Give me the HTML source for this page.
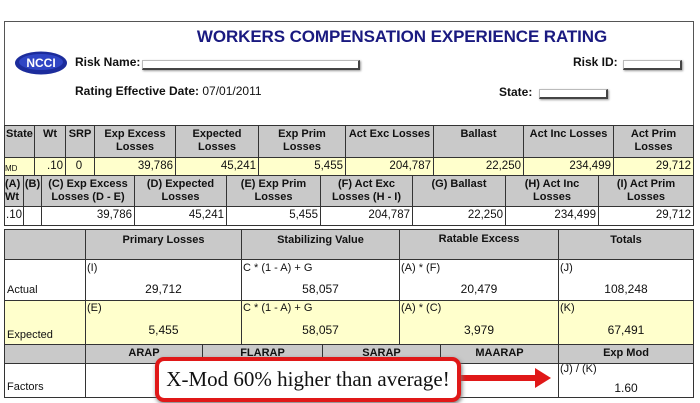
<!DOCTYPE html>
<html><head><style>
body{margin:0;width:700px;height:403px;background:#fff;position:relative;overflow:hidden;font-family:"Liberation Sans",Arial,sans-serif;color:#111}
.a{position:absolute;box-sizing:border-box}
.c{position:absolute;box-sizing:border-box;border:1px solid #333;font-size:11px;font-weight:bold;text-align:center;line-height:13px;padding-top:2px}
.g{background:#c9c9c9}
.y{background:#ffffcc}
.w{background:#fff}
.n{font-weight:normal;text-align:right;padding-right:2px;font-size:11.5px}
.inp{position:absolute;height:7px;border:1px solid #bbb;border-bottom:2px solid #444;border-right:2px solid #444;box-shadow:1px 1px 2px #999}
.t3{position:absolute;box-sizing:border-box;border:1px solid #333;font-size:11px}
</style></head><body>
<div class="a" style="left:4px;top:21px;width:690px;height:105px;border:1px solid #555;border-bottom:none"></div>
<div class="a" style="left:0;top:27px;width:814px;text-align:center;font-size:17px;font-weight:bold;color:#1a1a80;letter-spacing:-0.1px;padding-right:10px">WORKERS COMPENSATION EXPERIENCE RATING</div>
<svg class="a" style="left:14px;top:50px" width="54" height="26"><ellipse cx="27" cy="13" rx="26" ry="11.5" fill="#1c2c9c"/><ellipse cx="27" cy="12" rx="22" ry="8" fill="#2f45c4"/><text x="27" y="17" text-anchor="middle" font-family="Liberation Sans" font-weight="bold" font-size="12" fill="#fff">NCCI</text></svg>
<div class="a" style="left:75px;top:55px;font-size:12px;font-weight:bold">Risk Name:</div>
<div class="inp" style="left:142px;top:60px;width:215px"></div>
<div class="a" style="left:75px;top:84px;font-size:12px;font-weight:bold">Rating Effective Date: <span style="font-weight:normal">07/01/2011</span></div>
<div class="a" style="left:573px;top:55px;font-size:12px;font-weight:bold">Risk ID:</div>
<div class="inp" style="left:623px;top:60px;width:56px"></div>
<div class="a" style="left:499px;top:85px;font-size:12px;font-weight:bold">State:</div>
<div class="inp" style="left:539px;top:89px;width:66px"></div>

<div class="c g" style="left:4px;top:125px;width:31px;height:33px;text-align:left;padding-left:1px">State</div>
<div class="c g" style="left:34px;top:125px;width:32px;height:33px">Wt</div>
<div class="c g" style="left:65px;top:125px;width:30px;height:33px">SRP</div>
<div class="c g" style="left:94px;top:125px;width:82px;height:33px">Exp Excess<br>Losses</div>
<div class="c g" style="left:175px;top:125px;width:84px;height:33px">Expected<br>Losses</div>
<div class="c g" style="left:258px;top:125px;width:88px;height:33px">Exp Prim<br>Losses</div>
<div class="c g" style="left:345px;top:125px;width:89px;height:33px">Act Exc Losses</div>
<div class="c g" style="left:433px;top:125px;width:91px;height:33px">Ballast</div>
<div class="c g" style="left:523px;top:125px;width:91px;height:33px">Act Inc Losses</div>
<div class="c g" style="left:613px;top:125px;width:81px;height:33px">Act Prim<br>Losses</div>

<div class="c y n" style="left:4px;top:157px;width:31px;height:19px;text-align:left;font-size:8px;padding-top:4px">MD</div>
<div class="c y n" style="left:34px;top:157px;width:32px;height:19px">.10</div>
<div class="c y n" style="left:65px;top:157px;width:30px;height:19px;text-align:center">0</div>
<div class="c y n" style="left:94px;top:157px;width:82px;height:19px">39,786</div>
<div class="c y n" style="left:175px;top:157px;width:84px;height:19px">45,241</div>
<div class="c y n" style="left:258px;top:157px;width:88px;height:19px">5,455</div>
<div class="c y n" style="left:345px;top:157px;width:89px;height:19px">204,787</div>
<div class="c y n" style="left:433px;top:157px;width:91px;height:19px">22,250</div>
<div class="c y n" style="left:523px;top:157px;width:91px;height:19px">234,499</div>
<div class="c y n" style="left:613px;top:157px;width:81px;height:19px">29,712</div>

<div class="c g" style="left:4px;top:175px;width:20px;height:32px;text-align:left">(A)<br>Wt</div>
<div class="c g" style="left:23px;top:175px;width:19px;height:32px">(B)</div>
<div class="c g" style="left:41px;top:175px;width:94px;height:32px">(C) Exp Excess<br>Losses (D - E)</div>
<div class="c g" style="left:134px;top:175px;width:93px;height:32px">(D) Expected<br>Losses</div>
<div class="c g" style="left:226px;top:175px;width:95px;height:32px">(E) Exp Prim<br>Losses</div>
<div class="c g" style="left:320px;top:175px;width:93px;height:32px">(F) Act Exc<br>Losses (H - I)</div>
<div class="c g" style="left:412px;top:175px;width:94px;height:32px">(G) Ballast</div>
<div class="c g" style="left:505px;top:175px;width:94px;height:32px">(H) Act Inc<br>Losses</div>
<div class="c g" style="left:598px;top:175px;width:96px;height:32px">(I) Act Prim<br>Losses</div>

<div class="c w n" style="left:4px;top:206px;width:20px;height:20px;text-align:left;padding-left:1px">.10</div>
<div class="c w n" style="left:23px;top:206px;width:19px;height:20px"></div>
<div class="c w n" style="left:41px;top:206px;width:94px;height:20px">39,786</div>
<div class="c w n" style="left:134px;top:206px;width:93px;height:20px">45,241</div>
<div class="c w n" style="left:226px;top:206px;width:95px;height:20px">5,455</div>
<div class="c w n" style="left:320px;top:206px;width:93px;height:20px">204,787</div>
<div class="c w n" style="left:412px;top:206px;width:94px;height:20px">22,250</div>
<div class="c w n" style="left:505px;top:206px;width:94px;height:20px">234,499</div>
<div class="c w n" style="left:598px;top:206px;width:96px;height:20px">29,712</div>

<div class="c g" style="left:4px;top:229px;width:82px;height:31px"></div>
<div class="c g" style="left:85px;top:229px;width:157px;height:31px;padding-top:4px">Primary Losses</div>
<div class="c g" style="left:241px;top:229px;width:159px;height:31px;padding-top:4px">Stabilizing Value</div>
<div class="c g" style="left:399px;top:229px;width:160px;height:31px;padding-top:3px">Ratable Excess</div>
<div class="c g" style="left:558px;top:229px;width:136px;height:31px;padding-top:4px">Totals</div>

<div class="t3 w" style="left:4px;top:259px;width:82px;height:42px"><span style="position:absolute;left:2px;top:24px">Actual</span></div>
<div class="t3 w" style="left:85px;top:259px;width:157px;height:42px"><span style="position:absolute;left:1px;top:2px">(I)</span><span style="position:absolute;left:0;width:100%;text-align:center;top:22px;font-size:12px">29,712</span></div>
<div class="t3 w" style="left:241px;top:259px;width:159px;height:42px"><span style="position:absolute;left:1px;top:2px">C * (1 - A) + G</span><span style="position:absolute;left:0;width:100%;text-align:center;top:22px;font-size:12px">58,057</span></div>
<div class="t3 w" style="left:399px;top:259px;width:160px;height:42px"><span style="position:absolute;left:1px;top:2px">(A) * (F)</span><span style="position:absolute;left:0;width:100%;text-align:center;top:22px;font-size:12px">20,479</span></div>
<div class="t3 w" style="left:558px;top:259px;width:136px;height:42px"><span style="position:absolute;left:1px;top:2px">(J)</span><span style="position:absolute;left:0;width:100%;text-align:center;top:22px;font-size:12px">108,248</span></div>

<div class="t3 y" style="left:4px;top:300px;width:82px;height:45px"><span style="position:absolute;left:2px;top:28px">Expected</span></div>
<div class="t3 y" style="left:85px;top:300px;width:157px;height:45px"><span style="position:absolute;left:1px;top:1px">(E)</span><span style="position:absolute;left:0;width:100%;text-align:center;top:22px;font-size:12px">5,455</span></div>
<div class="t3 y" style="left:241px;top:300px;width:159px;height:45px"><span style="position:absolute;left:1px;top:1px">C * (1 - A) + G</span><span style="position:absolute;left:0;width:100%;text-align:center;top:22px;font-size:12px">58,057</span></div>
<div class="t3 y" style="left:399px;top:300px;width:160px;height:45px"><span style="position:absolute;left:1px;top:1px">(A) * (C)</span><span style="position:absolute;left:0;width:100%;text-align:center;top:22px;font-size:12px">3,979</span></div>
<div class="t3 y" style="left:558px;top:300px;width:136px;height:45px"><span style="position:absolute;left:1px;top:1px">(K)</span><span style="position:absolute;left:0;width:100%;text-align:center;top:22px;font-size:12px">67,491</span></div>

<div class="c g" style="left:4px;top:344px;width:82px;height:20px"></div>
<div class="c g" style="left:85px;top:344px;width:118px;height:20px">ARAP</div>
<div class="c g" style="left:202px;top:344px;width:121px;height:20px">FLARAP</div>
<div class="c g" style="left:322px;top:344px;width:119px;height:20px">SARAP</div>
<div class="c g" style="left:440px;top:344px;width:119px;height:20px">MAARAP</div>
<div class="c g" style="left:558px;top:344px;width:136px;height:20px">Exp Mod</div>

<div class="t3 w" style="left:4px;top:363px;width:82px;height:35px"><span style="position:absolute;left:2px;top:17px">Factors</span></div>
<div class="t3 w" style="left:85px;top:363px;width:474px;height:35px"></div>
<div class="t3 w" style="left:558px;top:363px;width:136px;height:35px"><span style="position:absolute;left:1px;top:-1px">(J) / (K)</span><span style="position:absolute;left:0;width:100%;text-align:center;top:17px;font-size:12px">1.60</span></div>

<svg class="a" style="left:455px;top:365px" width="100" height="26"><rect x="0" y="10" width="82" height="6" fill="#e01818"/><polygon points="80,3 96,13 80,23" fill="#e01818"/></svg>
<div class="a" style="left:155px;top:357px;width:306px;height:45px;border:4px solid #e01818;border-radius:9px;background:#fff;box-shadow:1px 2px 4px #777;font-family:'Liberation Serif',serif;font-size:21px;text-align:center;line-height:37px;color:#111">X-Mod 60% higher than average!</div>
</body></html>
